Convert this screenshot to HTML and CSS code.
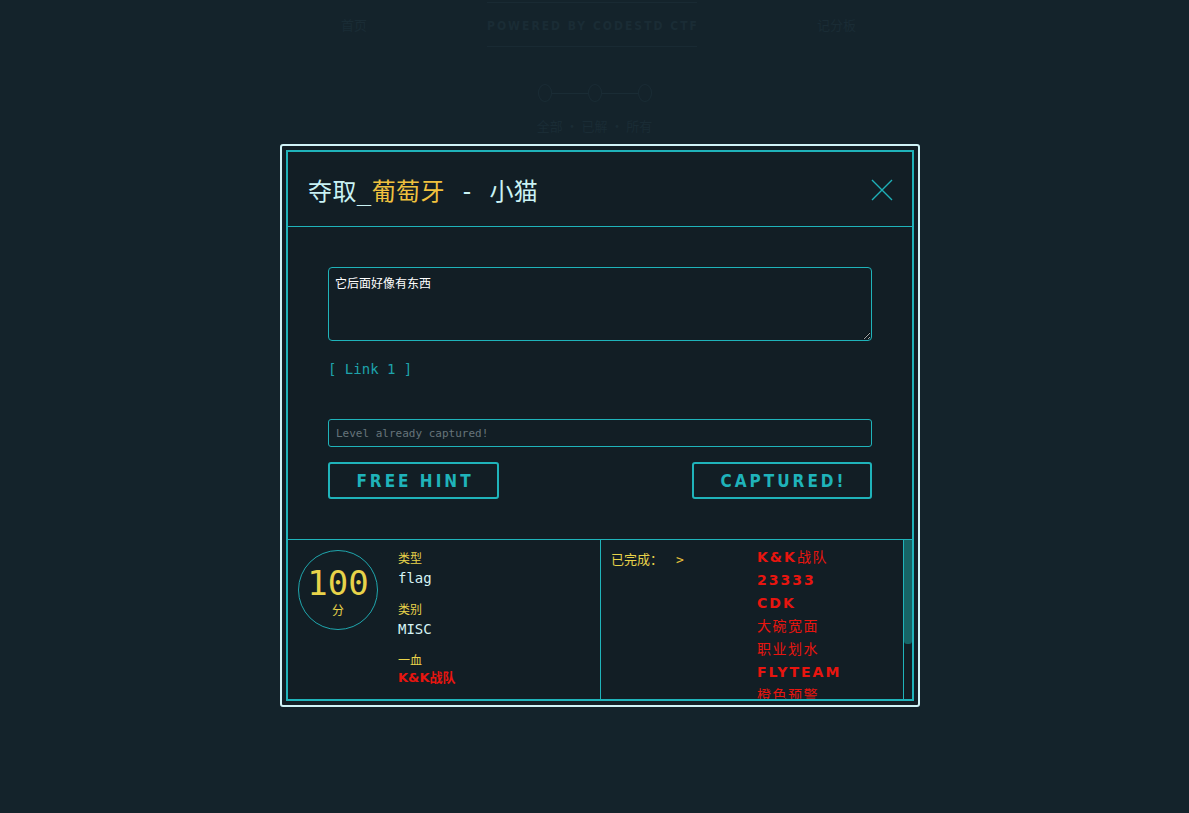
FILE: index.html
```html
<!DOCTYPE html>
<html lang="zh-CN">
<head>
<meta charset="utf-8">
<title>夺取_葡萄牙 - 小猫</title>
<link rel="stylesheet" href="styles.css">
</head>
<body>
<div class="page">
  <nav class="topnav">
    <span class="nav-item">首页</span>
    <div class="brand">
      <span class="brand-text">POWERED BY CODESTD CTF</span>
    </div>
    <span class="nav-item">记分板</span>
  </nav>
  <div class="steps">
    <span class="dot"></span><span class="bar"></span><span class="dot"></span><span class="bar"></span><span class="dot"></span>
  </div>
  <div class="filters">全部 · 已解 · 所有</div>
</div>

<div class="overlay">
  <div class="modal">
    <div class="modal-inner">
      <header class="modal-head">
        <h1 class="title">夺取_<span class="country">葡萄牙</span> - 小猫</h1>
        <button class="close" aria-label="关闭">
          <svg width="22" height="22" viewBox="0 0 22 22"><path d="M1 1 L21 21 M21 1 L1 21" stroke="#1eb0b8" stroke-width="1.4" fill="none"/></svg>
        </button>
      </header>
      <section class="modal-body">
        <textarea class="desc" readonly>它后面好像有东西</textarea>
        <a class="link">[ Link 1 ]</a>
        <input class="flag-input" type="text" placeholder="Level already captured!">
        <div class="actions">
          <button class="btn hint">FREE HINT</button>
          <button class="btn captured">CAPTURED!</button>
        </div>
      </section>
      <footer class="modal-foot">
        <div class="info">
          <div class="score"><span class="num">100</span><span class="unit">分</span></div>
          <dl class="meta">
            <dt>类型</dt><dd>flag</dd>
            <dt>类别</dt><dd>MISC</dd>
            <dt>一血</dt><dd class="red">K&amp;K战队</dd>
          </dl>
        </div>
        <div class="solvers-wrap">
          <div class="solvers">
            <div class="solved-label">已完成： <span class="arrow">&gt;</span></div>
            <ul class="teams">
              <li><b>K&amp;K</b>战队</li>
              <li><b>23333</b></li>
              <li><b>CDK</b></li>
              <li>大碗宽面</li>
              <li>职业划水</li>
              <li><b>FLYTEAM</b></li>
              <li>橙色预警</li>
            </ul>
          </div>
          <div class="scrollbar"><div class="thumb"></div></div>
        </div>
      </footer>
    </div>
  </div>
</div>
</body>
</html>
```

FILE: styles.css
```css
* { box-sizing: border-box; }
html, body { margin: 0; height: 100%; }
body {
  background: #14232b;
  font-family: "DejaVu Sans Mono", "Noto Sans CJK SC", monospace;
  overflow: hidden;
}

/* faint background page */
.page { color: #1a2c35; }
.topnav {
  display: flex;
  justify-content: center;
  align-items: center;
  gap: 120px;
  height: 48px;
  padding-left: 8px;
}
.nav-item { font-size: 13px; font-family: "Noto Sans CJK SC", sans-serif; }
.brand {
  border-top: 1px solid #192a33;
  border-bottom: 1px solid #192a33;
  padding: 12px 0;
  width: 210px;
  text-align: center;
  white-space: nowrap;
}
.brand-text { font-family: "DejaVu Sans Condensed", "DejaVu Sans", sans-serif; font-weight: bold; font-size: 12px; letter-spacing: 2px; }
.steps { display: flex; justify-content: center; align-items: center; margin-top: 36px; }
.dot { width: 14px; height: 18px; border: 1px solid #1a2c35; border-radius: 50%; }
.bar { width: 36px; height: 1px; background: #1a2c35; }
.filters { text-align: center; margin-top: 14px; font-size: 13px; font-family: "Noto Sans CJK SC", sans-serif; }

/* modal overlay */
.overlay {
  position: fixed;
  inset: 0;
  display: flex;
  justify-content: center;
  align-items: flex-start;
  padding-top: 144px;
  padding-left: 11px;
}
.modal {
  width: 640px;
  border: 2px solid #d0f3f7;
  border-radius: 3px;
  padding: 4px;
  background: #121e25;
}
.modal-inner {
  border: 2px solid #1fb3ba;
  background: #121e25;
}

.modal-head {
  display: flex;
  align-items: center;
  justify-content: space-between;
  height: 75px;
  padding: 0 19px 0 20px;
  border-bottom: 1px solid #1fb3ba;
}
.title {
  margin: 0;
  font-weight: normal;
  font-size: 24px;
  color: #c9f2f4;
  font-family: "DejaVu Sans Mono", "Noto Sans CJK SC", monospace;
  white-space: pre;
  letter-spacing: 0.4px;
  padding-top: 1px;
}
.country { color: #f0c23e; }
.close {
  background: none;
  border: 0;
  padding: 0;
  width: 22px;
  height: 22px;
  cursor: pointer;
  display: block;
  margin-top: 2px;
}
.close svg { display: block; }

.modal-body {
  padding: 40px 40px 40px;
  display: flex;
  flex-direction: column;
}
.desc {
  display: block;
  width: 544px;
  height: 74px;
  background: transparent;
  border: 1px solid #1fb3ba;
  border-radius: 4px;
  color: #ffffff;
  font-family: "Noto Sans CJK SC", sans-serif;
  font-size: 12px;
  line-height: 16px;
  padding: 7px 6px;
  outline: none;
}
.link {
  margin-top: 20px;
  color: #1ea3ab;
  font-size: 14px;
  line-height: 16px;
  height: 16px;
  font-family: "DejaVu Sans Mono", monospace;
}
.flag-input {
  margin-top: 42px;
  width: 544px;
  height: 28px;
  background: transparent;
  border: 1px solid #1fb3ba;
  border-radius: 3px;
  padding: 0 7px;
  font-family: "DejaVu Sans Mono", monospace;
  font-size: 11px;
  color: #cfe;
  outline: none;
}
.flag-input::placeholder { color: #66747a; }
.actions {
  margin-top: 15px;
  display: flex;
  justify-content: space-between;
}
.btn {
  height: 37px;
  background: transparent;
  border: 2px solid #1fb3ba;
  border-radius: 3px;
  color: #1fb3ba;
  font-family: "DejaVu Sans Condensed", "DejaVu Sans", sans-serif;
  font-weight: bold;
  font-size: 17px;
  letter-spacing: 3px;
  padding: 0 0 0 3px;
}
.hint { width: 171px; }
.captured { width: 180px; }

.modal-foot {
  display: grid;
  grid-template-columns: 313px 1fr;
  grid-template-rows: 160px;
  height: 160px;
  border-top: 1px solid #1fb3ba;
  overflow: hidden;
}
.info {
  display: flex;
  border-right: 1px solid #1fb3ba;
  padding: 10px;
  gap: 20px;
  overflow: hidden;
}
.score {
  width: 80px;
  height: 80px;
  flex: none;
  border: 1px solid #1fa6ad;
  border-radius: 50%;
  display: flex;
  flex-direction: column;
  align-items: center;
  justify-content: center;
  color: #e8d34a;
}
.num {
  font-size: 34px;
  line-height: 28px;
  margin-top: 6px;
  font-family: "DejaVu Sans Mono", monospace;
}
.unit { font-size: 12px; line-height: 16px; margin-top: 5px; font-family: "Noto Sans CJK SC", sans-serif; }
.meta { margin: 0; padding-top: 0; }
.meta dt {
  color: #e8d34a;
  font-size: 12px;
  line-height: 16px;
  font-family: "Noto Sans CJK SC", sans-serif;
}
.meta dd {
  margin: 3px 0 14px;
  color: #d6f4f5;
  font-size: 14px;
  line-height: 18px;
  font-family: "DejaVu Sans Mono", monospace;
}
.meta dd.red {
  color: #e8150f;
  font-family: "DejaVu Sans", "Noto Sans CJK SC", sans-serif;
  font-size: 13px;
  font-weight: bold;
  margin: 1px 0 0;
}

.solvers-wrap {
  display: flex;
  height: 160px;
  overflow: hidden;
}
.solvers {
  flex: 1;
  display: flex;
  overflow: hidden;
  padding: 10px 0 0 10px;
}
.scrollbar {
  width: 9px;
  flex: none;
  border-left: 1px solid #1fb3ba;
  background: #121e25;
}
.thumb {
  height: 104px;
  background: #176466;
  border-radius: 0 0 3px 3px;
}
.solved-label {
  width: 146px;
  flex: none;
  color: #e8d34a;
  font-size: 13px;
  line-height: 18px;
  font-family: "Noto Sans CJK SC", sans-serif;
}
.arrow { color: #e8c23a; margin-left: 10px; font-family: "DejaVu Sans Mono", monospace; }
.teams {
  list-style: none;
  margin: -4px 0 0;
  padding: 0;
  color: #e8150f;
  font-size: 14px;
  line-height: 23px;
  letter-spacing: 1.5px;
  font-family: "DejaVu Sans", "Noto Sans CJK SC", sans-serif;
  font-weight: normal;
}
.teams b { font-weight: 600; letter-spacing: 2px; }
.teams li { white-space: nowrap; }
```
